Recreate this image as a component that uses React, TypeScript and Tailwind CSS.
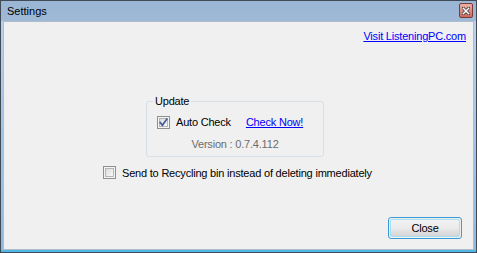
import React from "react";

function CheckBox({ checked }: { checked?: boolean }) {
  return (
    <div className="w-[13px] h-[13px] border border-[#8e8f8f] bg-[#f4f4f4] p-[1px] shrink-0">
      <div className="w-full h-full border border-[#b5b5b5] bg-gradient-to-br from-[#dcdcdc] to-[#fbfbfb] relative">
        {checked && (
          <svg className="absolute -left-[1px] -top-[1px]" width="9" height="9" viewBox="0 0 9 9">
            <path d="M1.2 4.6 L3.4 7.2 L7.8 1.2" fill="none" stroke="#4a5f97" strokeWidth="1.8" strokeLinecap="square" strokeLinejoin="miter" />
          </svg>
        )}
      </div>
    </div>
  );
}

export default function App() {
  return (
    <div
      className="w-[477px] h-[253px] border border-[#404b57] bg-gradient-to-b from-[#9bb6d4] via-[#b3cbe6] to-[#b9d1ea] flex flex-col text-[11px] leading-[13px] text-black"
      style={{ fontFamily: '"Liberation Sans", Arial, sans-serif' }}
    >
      {/* title bar */}
      <div className="h-[20px] flex items-start justify-between pl-[6px] pr-[3px]">
        <span className="pt-[4px] text-[11px]">Settings</span>
        <div className="mt-[2px] w-[14px] h-[15px] rounded-[2px] border border-[#7a3a35] bg-gradient-to-b from-[#eab0a8] to-[#c96a5e] flex items-center justify-center">
          <svg width="8" height="8" viewBox="0 0 8 8">
            <path d="M1 1 L7 7 M7 1 L1 7" stroke="#3a2a2a" strokeWidth="3" strokeLinecap="square" />
            <path d="M1.3 1.3 L6.7 6.7 M6.7 1.3 L1.3 6.7" stroke="#ffffff" strokeWidth="1.6" strokeLinecap="square" />
          </svg>
        </div>
      </div>
      {/* body */}
      <div className="flex-1 flex px-[2px] bg-gradient-to-b from-[#b9d1ea] to-[#8fb8e0]">
        <div className="flex-1 border border-[#aebdcc] bg-[#f0f0f0] flex flex-col tracking-[-0.2px]">
          <div className="flex justify-end pr-[7px] pt-[8px]">
            <span className="text-[#0000ff] underline">Visit ListeningPC.com</span>
          </div>
          <fieldset className="ml-[142px] mt-[52px] w-[178px] border border-[#d5dfe5] rounded-[3px] pl-[10px] pr-[4px] pb-[5px]">
            <legend className="-ml-[4px] px-[2px]">Update</legend>
            <div className="flex items-center h-[13px] mt-[8px]">
              <CheckBox checked />
              <span className="ml-[6px]">Auto Check</span>
              <span className="ml-[15px] text-[#0000ff] underline">Check Now!</span>
            </div>
            <div className="mt-[9px] -ml-[6px] text-center text-[#6d6d6d]">Version : 0.7.4.112</div>
          </fieldset>
          <div className="ml-[99px] mt-[9px] flex items-center h-[13px]">
            <CheckBox />
            <span className="ml-[6px] pt-[2px]">Send to Recycling bin instead of deleting immediately</span>
          </div>
          <div className="mt-auto mb-[10px] mr-[11px] flex justify-end">
            <div className="w-[74px] h-[22px] rounded-[3px] border border-[#3c9ad6] p-[1px]">
              <div className="w-full h-full rounded-[2px] border border-[#a6e0f6] bg-gradient-to-b from-[#f2f2f2] via-[#ebebeb] to-[#d4d4d4] flex items-center justify-center">
                Close
              </div>
            </div>
          </div>
        </div>
      </div>
      <div className="h-[2px] bg-[#4fb8e6]" />
    </div>
  );
}
